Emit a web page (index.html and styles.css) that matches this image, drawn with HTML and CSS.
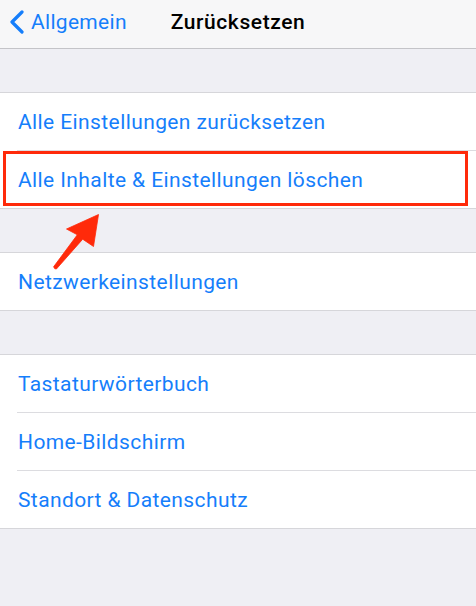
FILE: index.html
```html
<!DOCTYPE html>
<html lang="de">
<head>
<meta charset="utf-8">
<link rel="stylesheet" href="styles.css">
</head>
<body>
<div class="screen">
  <header class="nav">
    <div class="back">
      <svg class="chev" width="16" height="24" viewBox="0 0 16 24"><path d="M13 2 L3 12 L13 22" fill="none" stroke="#157efb" stroke-width="3.2" stroke-linecap="round" stroke-linejoin="round"/></svg>
      <span>Allgemein</span>
    </div>
    <div class="title">Zurücksetzen</div>
  </header>

  <section class="group">
    <div class="row">Alle Einstellungen zurücksetzen</div>
    <div class="row highlighted">Alle Inhalte &amp; Einstellungen löschen<span class="box"></span></div>
  </section>

  <section class="group">
    <div class="row">Netzwerkeinstellungen</div>
  </section>

  <section class="group">
    <div class="row">Tastaturwörterbuch</div>
    <div class="row">Home-Bildschirm</div>
    <div class="row">Standort &amp; Datenschutz</div>
  </section>

  <svg class="arrow" width="70" height="80" viewBox="0 0 70 80">
    <path d="M58.5 14.5 L26.5 29 L37.3 34.8 L13.6 66.8 Q14.5 69.5 16.4 69 L42.7 39.2 L53.5 46.5 Z" fill="#ff2a0a" stroke="#ff2a0a" stroke-width="0.8" stroke-linejoin="round"/>
  </svg>
</div>
</body>
</html>
```

FILE: styles.css
```css
html, body {
  margin: 0;
  padding: 0;
}
body {
  background: #efeff4;
  font-family: Roboto, "Noto Sans", "Liberation Sans", sans-serif;
}
.screen {
  position: relative;
  width: 476px;
  height: 606px;
  overflow: hidden;
  background: #efeff4;
}
.nav {
  position: relative;
  height: 48px;
  background: #f7f7f8;
  border-bottom: 1px solid #c4c4c8;
  display: flex;
  align-items: center;
  justify-content: center;
}
.back {
  position: absolute;
  left: 9px;
  top: 0;
  height: 48px;
  display: flex;
  align-items: center;
  gap: 6px;
  color: #157efb;
  font-size: 21px;
  letter-spacing: 0.3px;
  padding-bottom: 4px;
  box-sizing: border-box;
}
.chev {
  display: block;
}
.title {
  font-size: 21px;
  font-weight: 500;
  letter-spacing: 0.6px;
  color: #000;
  padding-bottom: 4px;
}
.group {
  margin-top: 43px;
  background: #fff;
  border-top: 1px solid #d6d6da;
  border-bottom: 1px solid #d6d6da;
}
.row {
  position: relative;
  height: 57px;
  display: flex;
  align-items: center;
  padding-left: 18px;
  color: #157efb;
  font-size: 21px;
  letter-spacing: 0.4px;
}
.row + .row {
  border-top: 1px solid transparent;
}
.row + .row::before {
  content: "";
  position: absolute;
  left: 17px;
  right: 0;
  top: -1px;
  height: 1px;
  background: #dcdce0;
}
.box {
  position: absolute;
  left: 3px;
  top: 0;
  right: 8px;
  bottom: 2px;
  border: 3px solid #ff2a0a;
}
.arrow {
  position: absolute;
  left: 40px;
  top: 200px;
}
```
